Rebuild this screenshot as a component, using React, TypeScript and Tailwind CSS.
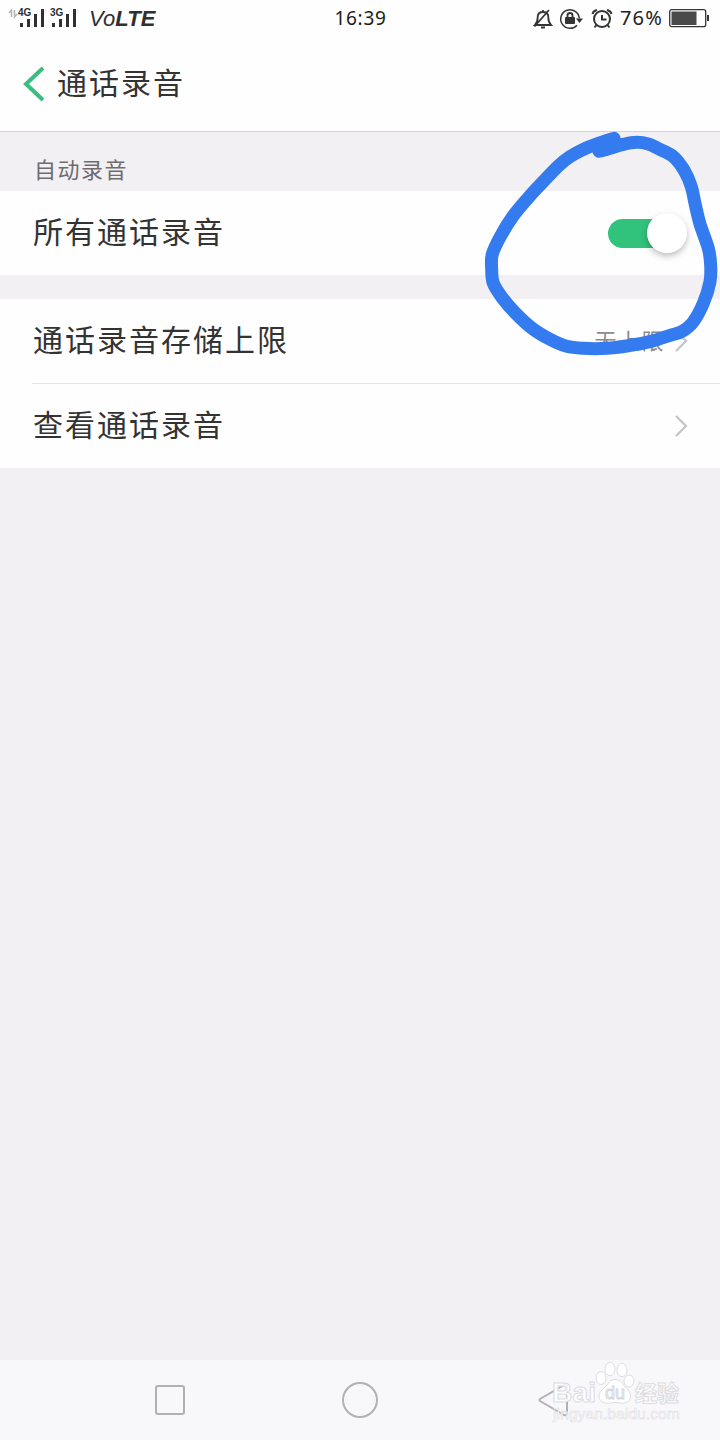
import React from 'react';

const Bars = ({ label, className }: { label: string; className: string }) => (
  <div className={`relative h-[20px] ${className}`}>
    <span className="absolute left-0 top-0 font-['Liberation_Sans',sans-serif] text-[10px] leading-[8px] font-bold">{label}</span>
    <svg className="absolute left-[2px] top-0" width="26" height="19" fill="#303030">
      <rect x="0" y="14" width="3" height="4" />
      <rect x="7" y="10" width="3" height="8" />
      <rect x="14" y="5" width="3" height="13" />
      <rect x="21" y="0" width="3" height="18" />
    </svg>
  </div>
);

const StatusBar = () => (
  <div className="flex h-[37px] items-center justify-between pl-[8px] pr-[10px] text-[#303030]">
    <div className="flex w-[240px] items-center">
      <svg width="10" height="20" fill="none" stroke="#b4b4b4" strokeWidth="1.500">
        <path d="M3.500 8V1L1 4M6.500 1v7l2.500-3" />
      </svg>
      <Bars label="4G" className="w-[32px]" />
      <Bars label="3G" className="w-[39px]" />
      <span className="font-['Liberation_Sans',sans-serif] text-[22px] leading-[22px] italic tracking-[0.100px]">
        Vo<b>LTE</b>
      </span>
    </div>
    <span className="mr-[-3px] mt-[-1px] text-[19px] tracking-[0.700px] text-[#1c1c1c]">16:39</span>
    <div className="flex w-[240px] items-center justify-end">
      <svg width="20" height="22" viewBox="0 0 20 22" fill="none" stroke="#343434" strokeWidth="1.800" className="mr-[6px]">
        <path d="M2 17h16c-2-2-2.700-4-2.700-8 0-3-2-5-5.300-5s-5.300 2-5.300 5c0 4-.7 6-2.700 8zM10 4V2M8 19.500h4M1.500 18.500L16 2" />
      </svg>
      <svg width="25" height="22" viewBox="0 0 25 22" fill="none" stroke="#343434" strokeWidth="1.500" className="mr-[7px]">
        <path d="M18 17.200A9.300 9.300 0 1 1 20.300 10.500" />
        <path d="M17 10.500h7l-3.500 4.500z" fill="#343434" stroke="none" />
        <rect x="6" y="9" width="10" height="7" rx="1" fill="#343434" stroke="none" />
        <path d="M8.500 10V7.500a2.500 2.500 0 0 1 5 0V10" strokeWidth="1.900" />
      </svg>
      <svg width="22" height="22" viewBox="0 0 22 22" fill="none" stroke="#343434" strokeWidth="2" className="mr-[7px]">
        <circle cx="11" cy="11" r="8" />
        <path d="M11 7v4.500h4.500M5.500 17l-2 2.500M16.500 17l2 2.500M1.500 6Q2 3 6 2M20.500 6Q20 3 16 2" />
      </svg>
      <span className="mt-[-2px] text-[20px] tracking-[1.200px] text-[#222] mr-[6px]">76%</span>
      <svg width="41" height="19" viewBox="0 0 41 19">
        <rect x="0.700" y="0.700" width="36" height="17" rx="2" fill="none" stroke="#343434" strokeWidth="1.300" />
        <rect x="2.500" y="2.500" width="25" height="13.500" fill="#4a4a4a" />
        <rect x="38" y="6" width="2" height="6" fill="#343434" />
      </svg>
    </div>
  </div>
);

const Chevron = () => (
  <svg width="14" height="24" viewBox="0 0 14 24" fill="none" stroke="#c4c4c6" strokeWidth="2.200">
    <path d="M2 2l10 10L2 22" />
  </svg>
);

const Watermark = () => (
  <div className="absolute left-[551px] top-[1360px] h-[64px] w-[132px]">
    <svg width="132" height="64" viewBox="0 0 132 64" fill="#ffffff" fillOpacity="0.850" stroke="#dddcdf" strokeWidth="1" className="overflow-visible">
      <text x="1" y="42" fontSize="28" fontFamily="Liberation Sans, sans-serif" fontWeight="bold" textLength="44" lengthAdjust="spacingAndGlyphs">Bai</text>
      <ellipse cx="50" cy="18" rx="5" ry="6.500" />
      <ellipse cx="59" cy="9" rx="5" ry="6.700" />
      <ellipse cx="71" cy="10" rx="5" ry="6.700" />
      <ellipse cx="78" cy="21" rx="5" ry="6" />
      <path d="M64 19.500c5 0 7 3 9 6s7 5 6.500 11-6 7.500-11 6.500q-4.500-1-9 0c-5 1-11-1-11.500-6s4-8 7-11 4-6.500 9-6.500z" />
      <text x="54" y="39" fontSize="19" fontFamily="Liberation Sans, sans-serif" textLength="20" lengthAdjust="spacingAndGlyphs" stroke="#d5d4d7">du</text>
      <text x="84" y="41" fontSize="22" fontWeight="bold" fontFamily="Noto Sans CJK SC, sans-serif">经验</text>
      <text x="2" y="59" fontSize="14" strokeWidth="0.500" fontFamily="Liberation Sans, sans-serif" textLength="127" lengthAdjust="spacingAndGlyphs">jingyan.baidu.com</text>
    </svg>
  </div>
);

const strokePoints = [
  [432, 55], [385, 70], [340, 88], [300, 110], [265, 138], [205, 200], [175, 233], [128, 290], [92, 348], [67, 402], [65, 445], [70, 490],
  [98, 535], [135, 578], [185, 624], [240, 658], [290, 679], [340, 685], [410, 685], [470, 678], [540, 665], [600, 646], [635, 635],
  [668, 608], [700, 550], [720, 485], [722, 435], [715, 385], [690, 312], [675, 250], [664, 200], [643, 152],
  [610, 110], [570, 88], [535, 72], [500, 67], [460, 73], [420, 85], [387, 94], [405, 80], [438, 68],
];

function smoothPath(points: number[][]) {
  let d = `M${points[0][0]} ${points[0][1]}`;
  for (let i = 0; i < points.length - 1; i++) {
    const a = points[Math.max(i - 1, 0)];
    const b = points[i];
    const c = points[i + 1];
    const e = points[Math.min(i + 2, points.length - 1)];
    d += `C${b[0] + (c[0] - a[0]) / 6} ${b[1] + (c[1] - a[1]) / 6} ${c[0] - (e[0] - b[0]) / 6} ${c[1] - (e[1] - b[1]) / 6} ${c[0]} ${c[1]}`;
  }
  return d;
}

const label = 'mt-[-2px] text-[30px] leading-[40px] tracking-[2px] text-[#333]';

export default function App() {
  return (
    <div className="relative flex h-[1440px] w-[720px] flex-col overflow-hidden bg-[#f2f0f3] font-['Noto_Sans','Noto_Sans_CJK_SC',sans-serif]">
      <header className="h-[132px] border-b border-[#d2d2d4] bg-[#fefefe]">
        <StatusBar />
        <div className="flex h-[94px] items-center pl-[23px]">
          <svg width="22" height="36" viewBox="0 0 22 36" fill="none" stroke="#3bbd80" strokeWidth="4">
            <path d="M20 2L3 18l17 16" />
          </svg>
          <h1 className={`ml-[12px] ${label}`}>通话录音</h1>
        </div>
      </header>
      <div className="h-[59px] pl-[34px] pt-[22px] text-[22px] leading-[30px] tracking-[1.500px] text-[#6d6d70]">自动录音</div>
      <div className="flex h-[84px] items-center justify-between bg-[#fefefe] pl-[33px] pr-[33px]">
        <span className={label}>所有通话录音</span>
        <div className="flex h-[29px] w-[79px] items-center justify-end rounded-full bg-gradient-to-r from-[#31c27c] from-70% to-transparent to-70%">
          <div className="size-[40px] shrink-0 rounded-full bg-white shadow-[0_3px_6px_rgba(0,0,0,0.250)]" />
        </div>
      </div>
      <div className="mt-[24px] bg-[#fefefe]">
        <div className="flex h-[84px] items-center justify-between pl-[33px] pr-[32px]">
          <span className={label}>通话录音存储上限</span>
          <span className="flex items-center gap-[9px] text-[22px] tracking-[1.500px] text-[#8c8c8e]">
            <span className="mt-[-2px]">无上限</span>
            <Chevron />
          </span>
        </div>
        <div className="ml-[32px] h-px bg-[#e5e4e8]" />
        <div className="flex h-[84px] items-center justify-between pl-[33px] pr-[32px]">
          <span className={label}>查看通话录音</span>
          <Chevron />
        </div>
      </div>
      <nav className="mt-auto flex h-[80px] items-center bg-[#f8f7fa] pl-[155px]">
        <div className="size-[30px] rounded-[3px] border-2 border-[#b1b0b3]" />
        <div className="ml-[157px] size-[36px] rounded-full border-2 border-[#b1b0b3]" />
        <svg width="32" height="34" viewBox="0 0 32 34" fill="none" stroke="#b1b0b3" strokeWidth="2" strokeLinejoin="round" className="ml-[160px]">
          <path d="M2 16Q1 17 2 18L26 32Q29 33 29 30V4Q29 1 26 2Z" />
        </svg>
      </nav>
      <svg className="absolute left-[470px] top-[120px]" width="250" height="250" viewBox="0 0 750 750" fill="none" stroke="#357bf0" strokeWidth="39" strokeLinecap="round" strokeLinejoin="round">
        <path d={smoothPath(strokePoints)} />
      </svg>
      <Watermark />
    </div>
  );
}
